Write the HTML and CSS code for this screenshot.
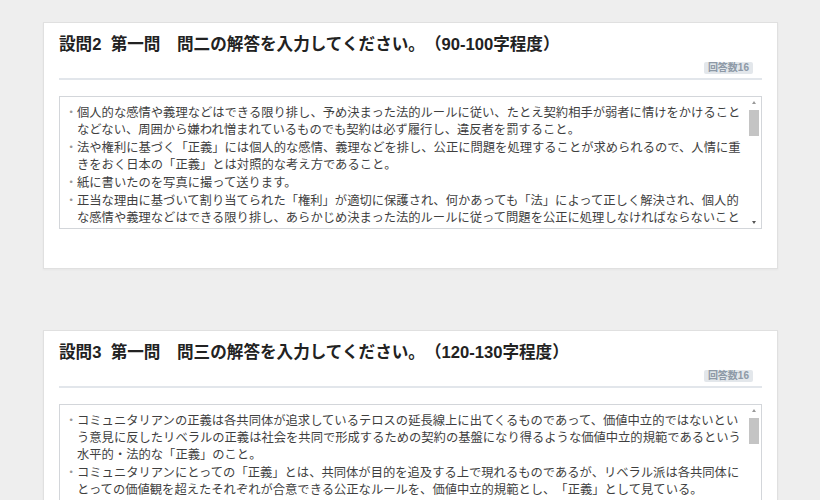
FILE: index.html
```html
<!DOCTYPE html>
<html lang="ja">
<head>
    <meta charset="UTF-8">
    <meta name="viewport" content="width=device-width, initial-scale=1.0">
    <title>回答一覧</title>
    <link rel="stylesheet" href="styles.css">
</head>
<body>

    <div class="question">
        <h2 class="question-title">設問2&nbsp; 第一問　問二の解答を入力してください。（90-100字程度）</h2>
        <div class="question-meta">
            <span class="count">回答数16</span>
        </div>
        <div class="answers">
            <ul>
                <li>個人的な感情や義理などはできる限り排し、予め決まった法的ルールに従い、たとえ契約相手が弱者に情けをかけることなどない、周囲から嫌われ憎まれているものでも契約は必ず履行し、違反者を罰すること。</li>
                <li>法や権利に基づく「正義」には個人的な感情、義理などを排し、公正に問題を処理することが求められるので、人情に重きをおく日本の「正義」とは対照的な考え方であること。</li>
                <li>紙に書いたのを写真に撮って送ります。</li>
                <li>正当な理由に基づいて割り当てられた「権利」が適切に保護され、何かあっても「法」によって正しく解決され、個人的な感情や義理などはできる限り排し、あらかじめ決まった法的ルールに従って問題を公正に処理しなければならないことである。</li>
                <li>契約や法律によって定められた権利と義務に従い、感情や人間関係に左右されずに公平に物事を判断し、違反した者には相応の罰を与えること。</li>
                <li>欧米の「正義」は法と権利に基づくものであり、相手がどのような立場であっても決められたルールを守ることが求められる。</li>
                <li>個人の感情を排除して、あらかじめ定められた規則に従って公正に問題を解決すること。</li>
                <li>権利が正しく守られ、もめごとがあれば法によって解決されること。義理や人情よりもルールが優先される。</li>
            </ul>
            <div class="scrollbar">
                <span class="arrow up"></span>
                <div class="track"><div class="thumb"></div></div>
                <span class="arrow down"></span>
            </div>
        </div>
    </div>

    <div class="question">
        <h2 class="question-title">設問3&nbsp; 第一問　問三の解答を入力してください。（120-130字程度）</h2>
        <div class="question-meta">
            <span class="count">回答数16</span>
        </div>
        <div class="answers">
            <ul>
                <li>コミュニタリアンの正義は各共同体が追求しているテロスの延長線上に出てくるものであって、価値中立的ではないという意見に反したリベラルの正義は社会を共同で形成するための契約の基盤になり得るような価値中立的規範であるという水平的・法的な「正義」のこと。</li>
                <li>コミュニタリアンにとっての「正義」とは、共同体が目的を追及する上で現れるものであるが、リベラル派は各共同体にとっての価値観を超えたそれぞれが合意できる公正なルールを、価値中立的規範とし、「正義」として見ている。</li>
                <li>リベラルの正義は価値中立的なルールとして社会の基盤を形成するものであり、共同体の善とは切り離して考えられる。</li>
                <li>コミュニタリアンは共同体の善を重視し、リベラルは個人の権利と公正な手続きを重視する。</li>
            </ul>
            <div class="scrollbar">
                <span class="arrow up"></span>
                <div class="track"><div class="thumb"></div></div>
                <span class="arrow down"></span>
            </div>
        </div>
    </div>

</body>
</html>
```

FILE: styles.css
```css
body {
    font-family: "Liberation Sans", "Noto Sans CJK JP", sans-serif;
    background-color: #eeeeee;
    margin: 0;
    padding: 22px 42px 0 43px;
    color: #3f3f3f;
    text-spacing-trim: space-all;
}

.question {
    background-color: #ffffff;
    border: 1px solid #e0e0e0;
    box-shadow: 0 1px 2px rgba(0, 0, 0, 0.04);
    padding: 11px 15px 39px 15px;
    margin-bottom: 61px;
}

.question-title {
    font-size: 16.6px;
    line-height: 22px;
    font-weight: bold;
    color: #222222;
    margin: 0;
    padding: 0;
}

.question-meta {
    display: flex;
    justify-content: flex-end;
    padding: 6px 9px 4px 0;
    border-bottom: 2px solid #e2e6eb;
}

.count {
    font-size: 10px;
    line-height: 12px;
    font-weight: bold;
    color: #8d99a6;
    background-color: #e3e7eb;
    padding: 0 4px;
    border-radius: 2px;
}

/* answer box with a drawn scrollbar */
.answers {
    margin-top: 16px;
    height: 133px;
    box-sizing: border-box;
    border: 1px solid #d3d6da;
    display: flex;
    overflow: hidden;
}

.answers ul {
    flex: 1;
    list-style: none;
    margin: 0;
    padding: 8px 3px 0 5px;
    overflow: hidden;
}

.answers li {
    font-size: 12.3px;
    line-height: 17px;
    padding-left: 12px;
    text-indent: -12px;
    margin-bottom: 1px;
}

.answers li::before {
    content: "・";
    display: inline-block;
    width: 12px;
    text-indent: 0;
    color: #999999;
}

.scrollbar {
    width: 10px;
    margin-right: 2px;
    display: flex;
    flex-direction: column;
}

.arrow {
    height: 11px;
    display: flex;
    align-items: center;
    justify-content: center;
}

.arrow::after {
    content: "";
    width: 0;
    height: 0;
    border-left: 2.5px solid transparent;
    border-right: 2.5px solid transparent;
}

.arrow.up::after {
    border-bottom: 3px solid #999999;
}

.arrow.down::after {
    border-top: 3px solid #555555;
}

.track {
    flex: 1;
    padding-top: 2px;
}

.thumb {
    height: 26px;
    background-color: #c4c4c4;
}
```
